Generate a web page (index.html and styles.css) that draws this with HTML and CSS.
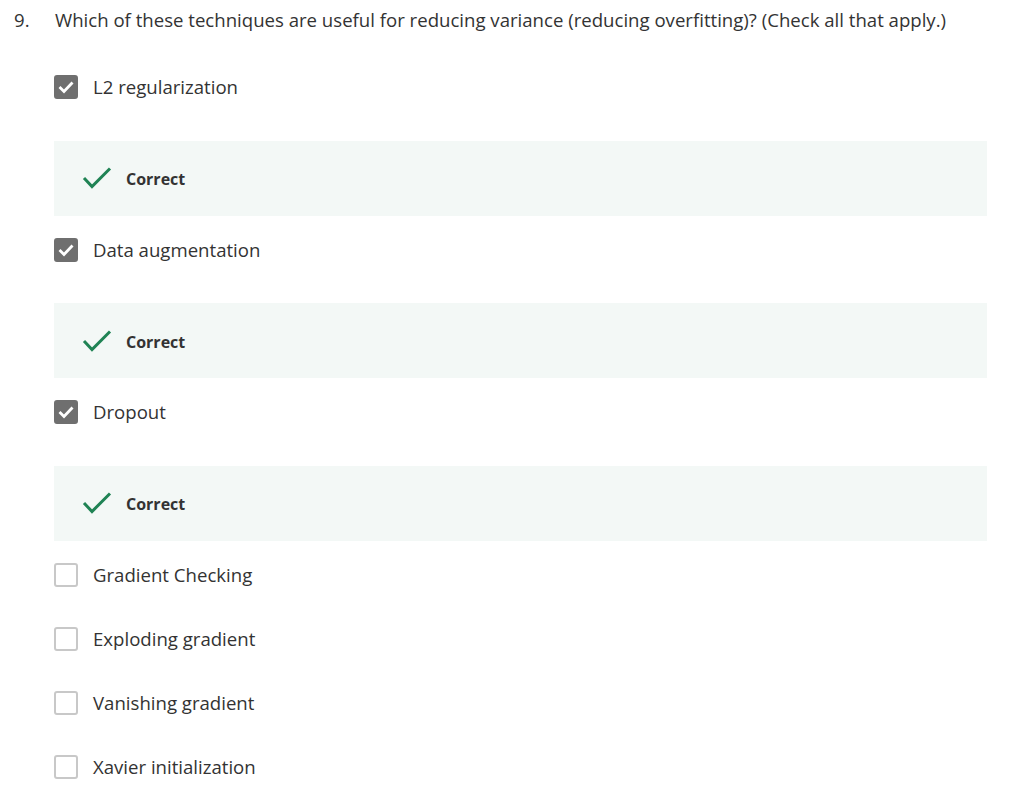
FILE: index.html
```html
<!DOCTYPE html>
<html>
<head>
<meta charset="utf-8">
<link rel="stylesheet" href="styles.css">
</head>
<body>
<div class="question">
  <div class="qhead">
    <span class="qnum">9.</span>
    <span class="qtext">Which of these techniques are useful for reducing variance (reducing overfitting)? (Check all that apply.)</span>
  </div>
  <div class="options">
    <div class="option">
      <span class="box checked"><svg viewBox="0 0 24 24" width="24" height="24"><path d="M5.5 12 L10 16.5 L18.5 7.5" fill="none" stroke="#fff" stroke-width="2.8"/></svg></span>
      <span class="label">L2 regularization</span>
    </div>
    <div class="feedback">
      <svg class="tick" viewBox="0 0 30 24" width="30" height="24"><path d="M2 12 L10 20.5 L28 2.5" fill="none" stroke="#1f8354" stroke-width="3"/></svg>
      <span class="ftext">Correct</span>
    </div>
    <div class="option">
      <span class="box checked"><svg viewBox="0 0 24 24" width="24" height="24"><path d="M5.5 12 L10 16.5 L18.5 7.5" fill="none" stroke="#fff" stroke-width="2.8"/></svg></span>
      <span class="label">Data augmentation</span>
    </div>
    <div class="feedback">
      <svg class="tick" viewBox="0 0 30 24" width="30" height="24"><path d="M2 12 L10 20.5 L28 2.5" fill="none" stroke="#1f8354" stroke-width="3"/></svg>
      <span class="ftext">Correct</span>
    </div>
    <div class="option">
      <span class="box checked"><svg viewBox="0 0 24 24" width="24" height="24"><path d="M5.5 12 L10 16.5 L18.5 7.5" fill="none" stroke="#fff" stroke-width="2.8"/></svg></span>
      <span class="label">Dropout</span>
    </div>
    <div class="feedback">
      <svg class="tick" viewBox="0 0 30 24" width="30" height="24"><path d="M2 12 L10 20.5 L28 2.5" fill="none" stroke="#1f8354" stroke-width="3"/></svg>
      <span class="ftext">Correct</span>
    </div>
    <div class="option">
      <span class="box"></span>
      <span class="label">Gradient Checking</span>
    </div>
    <div class="option">
      <span class="box"></span>
      <span class="label">Exploding gradient</span>
    </div>
    <div class="option">
      <span class="box"></span>
      <span class="label">Vanishing gradient</span>
    </div>
    <div class="option">
      <span class="box"></span>
      <span class="label">Xavier initialization</span>
    </div>
  </div>
</div>
</body>
</html>
```

FILE: styles.css
```css
html, body {
  margin: 0;
  padding: 0;
  background: #fff;
}
body {
  font-family: "Open Sans", "Liberation Sans", sans-serif;
  color: #333;
}
.question {
  padding: 8px 45px 0 14px;
}
.qhead {
  display: flex;
  font-size: 18.6px;
  line-height: 24px;
  height: 24px;
}
.qnum {
  width: 41px;
  flex: none;
}
.qtext {
  white-space: nowrap;
}
.options {
  display: flex;
  flex-direction: column;
  padding-left: 40px;
  padding-top: 43px;
}
.option {
  display: flex;
  align-items: center;
  height: 24px;
  margin-bottom: 40px;
}
.box {
  width: 24px;
  height: 24px;
  box-sizing: border-box;
  border: 2px solid #c8c8c8;
  border-radius: 3px;
  flex: none;
  position: relative;
  display: block;
}
.box.checked {
  background: #6f6f6f;
  border-color: #6f6f6f;
}
.box.checked svg {
  position: absolute;
  left: -2px;
  top: -2px;
}
.label {
  font-size: 18.6px;
  line-height: 24px;
  margin-left: 15px;
}
.feedback {
  margin-top: 1.5px;
  margin-bottom: 22px;
  height: 75px;
  background: #f3f8f6;
  display: flex;
  align-items: center;
  padding-left: 28px;
}
.tick {
  display: block;
  flex: none;
}
.ftext {
  font-size: 16px;
  font-weight: 700;
  margin-left: 14px;
  padding-top: 2px;
  color: #333;
}
```
